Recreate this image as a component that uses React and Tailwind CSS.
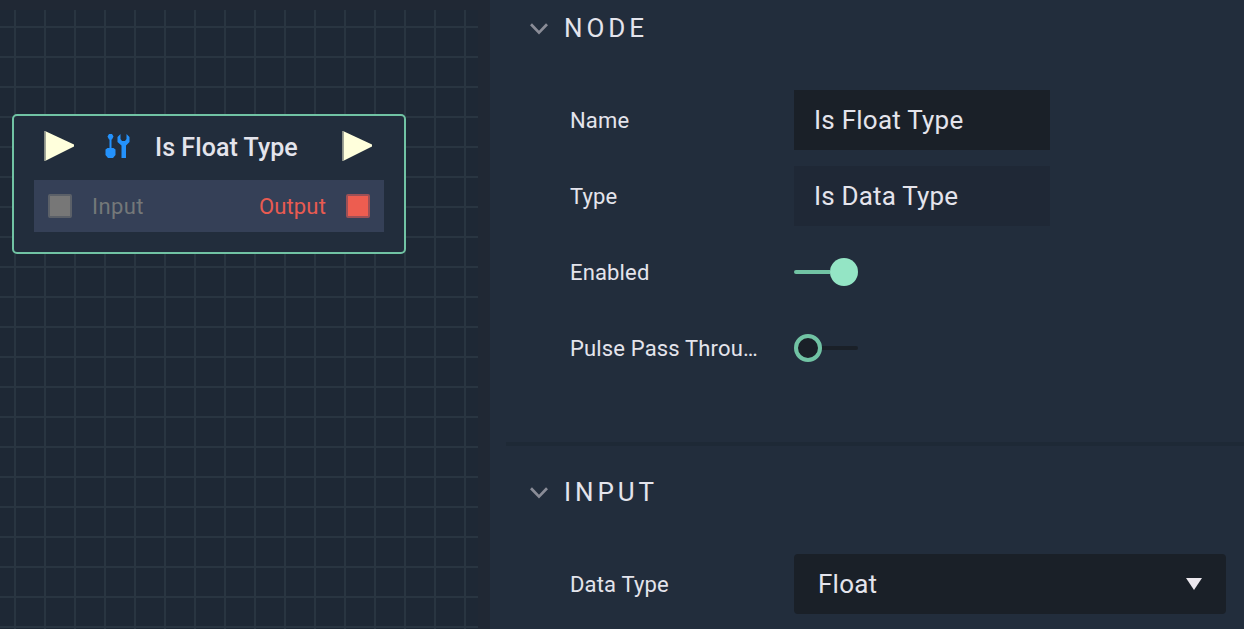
function Chevron() {
  return (
    <svg className="mt-[2px] h-[12px] w-[18px] shrink-0" viewBox="0 0 18 12" fill="none">
      <path d="M1 1.2 L9 9.6 L17 1.2" stroke="#8a8c97" strokeWidth="2.7" />
    </svg>
  );
}

function Section({ title, children }) {
  return (
    <section>
      <h2 className="flex h-14 items-center gap-4 pl-10 text-[26px] font-normal tracking-[3.9px]">
        <Chevron />
        <span className="pt-px">{title}</span>
      </h2>
      <div className="mt-[34px] flex flex-col gap-4 pl-20">{children}</div>
    </section>
  );
}

function Row({ label, children }) {
  return (
    <div className="flex h-[60px] items-center">
      <span className="w-56 shrink-0 whitespace-nowrap text-[22px] tracking-[0.16px]">{label}</span>
      {children}
    </div>
  );
}

function Pulse() {
  return (
    <svg className="h-[32px] w-[31px]" viewBox="0 0 31 32">
      <path d="M1 1 L30 14.6 V16.4 L1 31 Z" fill="#ffffdc" />
      <path d="M0.9 1 V31" stroke="#8b9087" strokeWidth="1.8" />
    </svg>
  );
}

function Tools() {
  return (
    <svg className="h-[24px] w-[25px]" viewBox="0 0 25 24" fill="#2492fc">
      <path d="M4 0 H7 L8.5 2.5 L7 5.5 H6.5 V14 H8.5 L10.5 15.5 V21 L8 24 H3 L0.5 21 V15.5 L2.5 14 H4.5 V5.5 H4 L2.5 2.5 Z" />
      <path d="M15.5 0 V5 L17 7 H20 L21.5 5 V0 L24.5 3 V8 L21 11.5 V24 H16.5 V11.5 L12.5 8 V3 Z" />
    </svg>
  );
}

export default function App() {
  return (
    <div className="flex h-[629px] w-[1244px] overflow-hidden bg-[#222d3c] font-['Roboto',sans-serif] text-[#e4e4ec]">
      <main className="relative h-full w-[490px] shrink-0 bg-[#202834] pt-[10px]">
        <div className="h-[619px] w-[478px] bg-[#1e2835] bg-[linear-gradient(to_right,#293541_2px,transparent_2px),linear-gradient(to_bottom,#293541_2px,transparent_2px)] bg-[size:30px_30px] bg-[position:14px_0px,0px_16px]" />
        <div className="absolute left-[12px] top-[114px] h-[140px] w-[394px] rounded-[5px] border-2 border-[#71c3a4] bg-[#222d3c] px-5 pt-[14px]">
          <div className="flex h-[32px] items-center pl-[10px]">
            <Pulse />
            <span className="ml-[30px] flex"><Tools /></span>
            <span className="ml-[25px] w-[187px] whitespace-nowrap pt-[3px] text-[25px] font-medium tracking-[0.07px]">Is Float Type</span>
            <Pulse />
          </div>
          <div className="mt-[18px] flex h-[52px] items-center bg-[#354057] px-[14px] text-[22px]">
            <span className="size-6 rounded-[2px] border-2 border-[#5b6068] bg-[#777777]" />
            <span className="ml-5 tracking-[0.4px] text-[#747879]">Input</span>
            <span className="ml-auto mr-5 tracking-[0.15px] text-[#e95b51]">Output</span>
            <span className="size-6 rounded-[2px] border-2 border-[#9c5056] bg-[#ed5d50]" />
          </div>
        </div>
      </main>
      <aside className="h-full flex-1">
        <Section title="NODE">
          <Row label="Name">
            <div className="flex h-full w-64 items-center bg-[#1a2028] pl-5 text-[26px] tracking-[0.24px]">Is Float Type</div>
          </Row>
          <Row label="Type">
            <div className="flex h-full w-64 items-center bg-[#1f2836] pl-5 text-[26px] tracking-[0.18px]">Is Data Type</div>
          </Row>
          <Row label="Enabled">
            <div className="flex w-16 items-center">
              <span className="h-1 flex-1 rounded-l-full bg-[#71c3a4]" />
              <span className="size-7 rounded-full bg-[#94e5c5]" />
            </div>
          </Row>
          <Row label="Pulse Pass Throu…">
            <div className="flex w-16 items-center">
              <span className="size-7 rounded-full border-4 border-[#71c3a4] bg-[#1a2028]" />
              <span className="h-1 flex-1 rounded-r-full bg-[#1a2028]" />
            </div>
          </Row>
        </Section>
        <div className="mb-[18px] ml-4 mt-16 h-1 bg-[#1e2936]" />
        <Section title="INPUT">
          <Row label="Data Type">
            <div className="flex h-full w-[432px] items-center justify-between rounded bg-[#1a2028] pl-6 pr-6 text-[26px] tracking-[0.24px]">
              <span>Float</span>
              <svg className="h-[12px] w-[16px]" viewBox="0 0 16 12">
                <path d="M0 0 H16 L8 12 Z" fill="#ece8ee" />
              </svg>
            </div>
          </Row>
        </Section>
      </aside>
    </div>
  );
}
